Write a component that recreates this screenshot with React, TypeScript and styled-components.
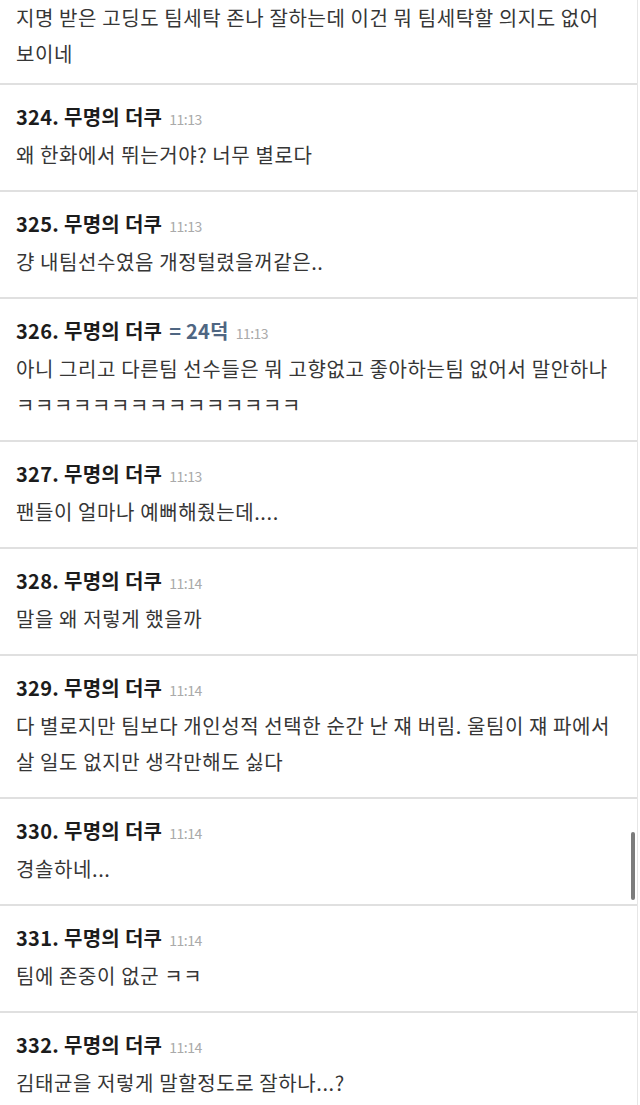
import React from "react";
import styled, { createGlobalStyle } from "styled-components";

interface Comment {
  no: number;
  author: string;
  badge?: string;
  time: string;
  text: string;
  partial?: boolean; // scrolled past: only the body is still on screen
}

const comments: Comment[] = [
  {
    no: 323,
    author: "무명의 더쿠",
    time: "11:13",
    text: "지명 받은 고딩도 팀세탁 존나 잘하는데 이건 뭐 팀세탁할 의지도 없어 보이네",
    partial: true,
  },
  { no: 324, author: "무명의 더쿠", time: "11:13", text: "왜 한화에서 뛰는거야?  너무 별로다" },
  { no: 325, author: "무명의 더쿠", time: "11:13", text: "걍 내팀선수였음 개정털렸을꺼같은.." },
  {
    no: 326,
    author: "무명의 더쿠",
    badge: "= 24덕",
    time: "11:13",
    text: "아니 그리고 다른팀 선수들은 뭐 고향없고 좋아하는팀 없어서 말안하나 ㅋㅋㅋㅋㅋㅋㅋㅋㅋㅋㅋㅋㅋㅋㅋ",
  },
  { no: 327, author: "무명의 더쿠", time: "11:13", text: "팬들이 얼마나 예뻐해줬는데...." },
  { no: 328, author: "무명의 더쿠", time: "11:14", text: "말을 왜 저렇게 했을까" },
  {
    no: 329,
    author: "무명의 더쿠",
    time: "11:14",
    text: "다 별로지만 팀보다 개인성적 선택한 순간 난 쟤 버림. 울팀이 쟤 파에서 살 일도 없지만 생각만해도 싫다",
  },
  { no: 330, author: "무명의 더쿠", time: "11:14", text: "경솔하네..." },
  { no: 331, author: "무명의 더쿠", time: "11:14", text: "팀에 존중이 없군 ㅋㅋ" },
  { no: 332, author: "무명의 더쿠", time: "11:14", text: "김태균을 저렇게 말할정도로 잘하나...?" },
];

const GlobalStyle = createGlobalStyle`
  html, body {
    margin: 0;
    padding: 0;
    background: #ffffff;
    overflow: hidden;
  }
  body {
    font-family: "Noto Sans CJK KR", "Noto Sans", sans-serif;
  }
`;

const App: React.FC = () => {
  return (
    <>
      <GlobalStyle />
      <Page>
        <CommentList>
          {comments.map((c) => (
            <CommentItem key={c.no} $partial={c.partial}>
              {!c.partial && (
                <CommentHeader>
                  <Author>
                    {c.no}. {c.author}
                  </Author>
                  {c.badge && <Badge>{c.badge}</Badge>}
                  <Time>{c.time}</Time>
                </CommentHeader>
              )}
              <Body>{c.text}</Body>
            </CommentItem>
          ))}
        </CommentList>
        <ScrollThumb />
      </Page>
    </>
  );
};

export default App;

const Page = styled.div`
  width: 640px;
  height: 1105px;
  overflow: hidden;
  position: relative;
  background: #fff;
`;

const CommentList = styled.div`
  display: flex;
  flex-direction: column;
  width: 637px;
  border-right: 1px solid #e6e6e6;
`;

const CommentItem = styled.div<{ $partial?: boolean }>`
  display: flex;
  flex-direction: column;
  gap: 5px;
  padding: ${(p) => (p.$partial ? "0 14px 11px 16px" : "17px 14px 17px 16px")};
  border-bottom: 2px solid #e0e0e0;
`;

const CommentHeader = styled.div`
  display: flex;
  align-items: baseline;
  gap: 7px;
  height: 30px;
  line-height: 30px;
`;

const Author = styled.span`
  font-size: 20px;
  font-weight: 700;
  color: #1c1c1c;
  letter-spacing: 0.3px;
`;

const Badge = styled.span`
  font-size: 20px;
  font-weight: 700;
  color: #4f6682;
  letter-spacing: 0.2px;
`;

const Time = styled.span`
  font-size: 14px;
  color: #aaaaaa;
  letter-spacing: -0.5px;
`;

const Body = styled.div`
  font-size: 20px;
  line-height: 36px;
  color: #363636;
  letter-spacing: 0.6px;
  word-break: keep-all;
`;

const ScrollThumb = styled.div`
  position: absolute;
  left: 631px;
  top: 832px;
  width: 4px;
  height: 68px;
  border-radius: 2px;
  background: #7c7c7c;
`;
